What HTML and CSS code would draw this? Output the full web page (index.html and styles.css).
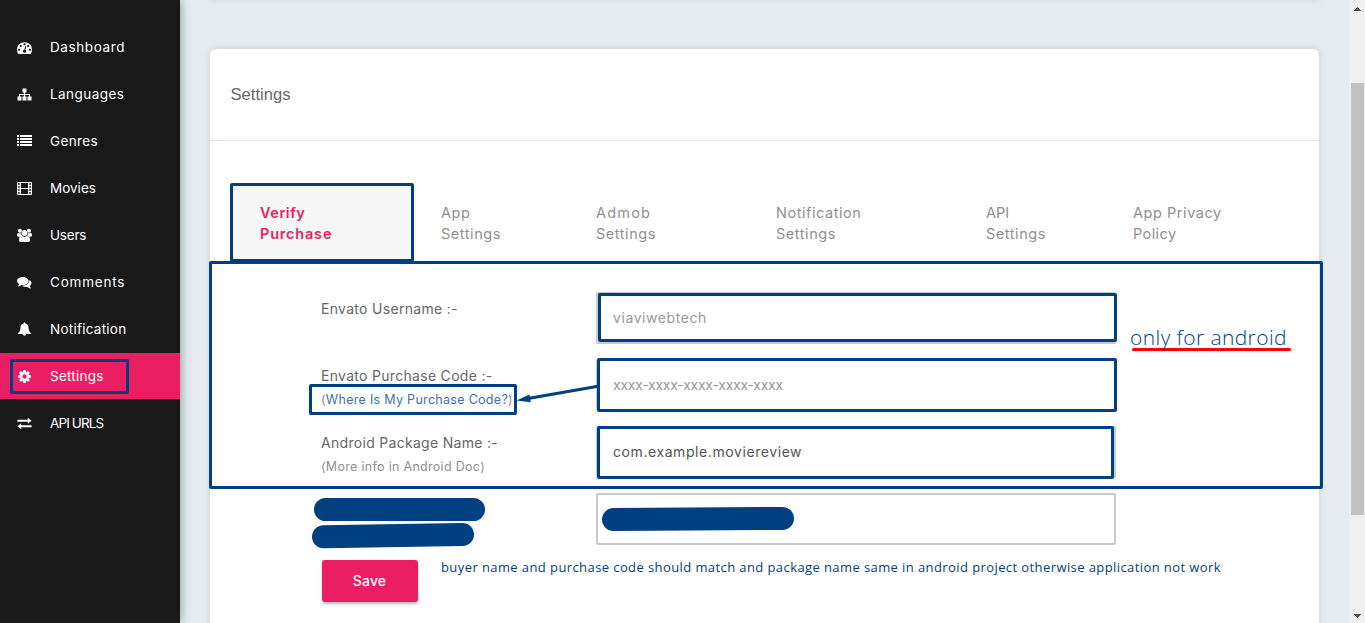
FILE: index.html
```html
<!DOCTYPE html>
<html lang="en">
<head>
<meta charset="utf-8">
<title>Settings</title>
<link rel="stylesheet" href="styles.css">
</head>
<body>
<div class="app">
  <nav class="sidebar">
    <a class="nav-item"><svg class="icon" viewBox="0 0 1792 1792"><path d="M384 1152q0-53-37.5-90.5t-90.5-37.5-90.5 37.5-37.5 90.5 37.5 90.5 90.5 37.5 90.5-37.5 37.5-90.5zm192-448q0-53-37.5-90.5t-90.5-37.5-90.5 37.5-37.5 90.5 37.5 90.5 90.5 37.5 90.5-37.5 37.5-90.5zm428 481l101-382q6-26-7.5-48.5t-38.5-29.5-48 6.5-30 39.5l-101 382q-60 5-107 43.5t-63 98.5q-20 77 20 146t117 89 146-20 89-117q16-60-6-117t-72-91zm660-33q0-53-37.5-90.5t-90.5-37.5-90.5 37.5-37.5 90.5 37.5 90.5 90.5 37.5 90.5-37.5 37.5-90.5zm-640-640q0-53-37.5-90.5t-90.5-37.5-90.5 37.5-37.5 90.5 37.5 90.5 90.5 37.5 90.5-37.5 37.5-90.5zm448 192q0-53-37.5-90.5t-90.5-37.5-90.5 37.5-37.5 90.5 37.5 90.5 90.5 37.5 90.5-37.5 37.5-90.5zm320 448q0 261-141 483-19 29-54 29h-1402q-35 0-54-29-141-221-141-483 0-182 71-348t191-286 286-191 348-71 348 71 286 191 191 286 71 348z"/></svg><span class="n1">Dashboard</span></a>
    <a class="nav-item"><svg class="icon" viewBox="0 0 15 15"><path d="M5.500 1.500h4v4H8.100v1.500h4.900v2.500h1.500v4h-4v-4h1.500V8H8.100v1.500h1.400v4h-4v-4h1.400V8H3v1.500h1.500v4h-4v-4H2V7h4.900V5.500H5.500z"/></svg><span class="n2">Languages</span></a>
    <a class="nav-item"><svg class="icon" viewBox="0 0 15 15"><path d="M0 1h2v2H0zm3 0h12v2H3zM0 4h2v2H0zm3 0h12v2H3zM0 7h2v2H0zm3 0h12v2H3zM0 10h2v2H0zm3 0h12v2H3z"/></svg><span class="n3">Genres</span></a>
    <a class="nav-item"><svg class="icon" viewBox="0 0 15 15"><path fill-rule="evenodd" d="M1 1h13q1 0 1 1v11q0 1-1 1H1q-1 0-1-1V2q0-1 1-1zM1 2.200v1.600h1.800V2.200zM1 5.200v1.600h1.800V5.200zM1 8.200v1.600h1.800V8.200zM1 11.200v1.600h1.800v-1.600zM12.200 2.200v1.600H14V2.200zM12.200 5.200v1.600H14V5.200zM12.200 8.200v1.600H14V8.200zM12.200 11.200v1.600H14v-1.600zM4 2v5h7V2zM4 8v5h7V8z"/></svg><span class="n4">Movies</span></a>
    <a class="nav-item"><svg class="icon" viewBox="0 0 15 15"><circle cx="3" cy="2.700" r="2"/><circle cx="12" cy="2.700" r="2"/><circle cx="7.500" cy="5" r="2.900"/><path d="M0 7.500Q0 4.700 1.200 4.700q1.600 1 2.900.4 0 1.900 1 3L2.700 8.700Q0 8.900 0 7.500zM15 7.500q0-2.800-1.200-2.800-1.600 1-2.900.4 0 1.900-1 3l2.400.6Q15 8.900 15 7.500zM2 12.200q0-4.200 2.700-4.400 2.800 1.800 5.600 0 2.700.2 2.700 4.400 0 1.800-1.800 1.800H3.800Q2 14 2 12.200z"/></svg><span class="n5">Users</span></a>
    <a class="nav-item"><svg class="icon" viewBox="0 0 15 15"><path d="M5.800 2C9 2 11.600 3.800 11.600 6S9 10 5.800 10l-1.200-.1Q3 11.300 1 11.400l-.2-.3Q2 10.300 2 9 0 7.800 0 6c0-2.200 2.600-4 5.800-4zM12.500 5.100q2 1.200 2 3 0 1.700-1.700 2.900 0 1.200 1.200 2l-.2.400q-2-.1-3.500-1.500-3.200.5-5.400-1.100 7.300 0 7.600-5.700z"/></svg><span class="n6">Comments</span></a>
    <a class="nav-item"><svg class="icon" viewBox="0 0 15 15"><path d="M7.500.3q.8 0 .8 1.100 3.200.6 3.200 4.200 0 4 2.700 5.900v.5H9.300q-.2 1.800-1.800 1.800T5.700 12H.8v-.5q2.700-1.900 2.700-5.900 0-3.600 3.200-4.200 0-1.100.8-1.100z"/></svg><span class="n7">Notification</span></a>
    <a class="nav-item active"><svg class="icon" viewBox="0 0 1792 1792"><path d="M1152 896q0-106-75-181t-181-75-181 75-75 181 75 181 181 75 181-75 75-181zm512-109v222q0 12-8 23t-20 13l-185 28q-19 54-39 91 35 50 107 138 10 12 10 25t-9 23q-27 37-99 108t-94 71q-12 0-26-9l-138-108q-44 23-91 38-16 136-29 186-7 28-36 28h-222q-14 0-24.500-8.500t-11.500-21.500l-28-184q-49-16-90-37l-141 107q-10 9-25 9-14 0-25-11-126-114-165-168-7-10-7-23 0-12 8-23 15-21 51-66.500t54-70.500q-27-50-41-99l-183-27q-13-2-21-12.500t-8-23.500v-222q0-12 8-23t19-13l186-28q14-46 39-92-40-57-107-138-10-12-10-24 0-10 9-23 26-36 98.500-107.500t94.500-71.500q13 0 26 10l138 107q44-23 91-38 16-136 29-186 7-28 36-28h222q14 0 24.500 8.500t11.500 21.500l28 184q49 16 90 37l142-107q9-9 24-9 13 0 25 10 129 119 165 170 7 8 7 22 0 12-8 23-15 21-51 66.500t-54 70.500q26 50 41 98l183 28q13 2 21 12.500t8 23.500z"/></svg><span class="n8">Settings</span></a>
    <a class="nav-item"><svg class="icon" viewBox="0 0 15 15"><path d="M.5 3.700h10.300V1.700L14.600 4.700l-3.800 3V5.700H.5zM14.600 9.300H4.200V7.300L.4 10.300l3.800 3v-2h10.400z"/></svg><span class="n9">API URLS</span></a>
  </nav>

  <main class="content">
    <div class="prev-card"></div>
    <section class="card">
      <header class="card-header">Settings</header>
      <div class="tabs">
        <a class="tab selected"><span class="t1">Verify</span><span class="t2">Purchase</span></a>
        <a class="tab"><span>App</span><span>Settings</span></a>
        <a class="tab"><span class="t4">Admob</span><span>Settings</span></a>
        <a class="tab"><span>Notification</span><span>Settings</span></a>
        <a class="tab"><span class="t5">API</span><span>Settings</span></a>
        <a class="tab"><span>App Privacy</span><span class="t6">Policy</span></a>
      </div>
      <form class="form">
        <div class="row">
          <div class="label"><span>Envato Username :-</span></div>
          <div class="field muted"><span class="f1">viaviwebtech</span></div>
        </div>
        <div class="row">
          <div class="label"><span>Envato Purchase Code :-</span><small>(<a class="link">Where Is My Purchase Code?</a>)</small></div>
          <div class="field muted"><span class="f2">xxxx-xxxx-xxxx-xxxx-xxxx</span></div>
        </div>
        <div class="row">
          <div class="label"><span>Android Package Name :-</span><small>(More info in Android Doc)</small></div>
          <div class="field"><span class="f3">com.example.moviereview</span></div>
        </div>
        <div class="row">
          <div class="label"></div>
          <div class="field"></div>
        </div>
        <div class="save">Save</div>
      </form>
    </section>
  </main>

  <div class="scrollbar">
    <svg class="arrow" viewBox="0 0 7 4" shape-rendering="crispEdges"><path d="M3 0h1v1h1v1h1v1h1v1H0V3h1V2h1V1h1z"/></svg>
    <div class="thumb"></div>
    <svg class="arrow" viewBox="0 0 7 4" shape-rendering="crispEdges"><path d="M0 0h7v1H6v1H5v1H4v1H3V3H2V2H1V1H0z"/></svg>
  </div>

  <svg class="marks" viewBox="0 0 1365 623">
    <g class="box">
      <rect x="11.500" y="360.500" width="116" height="32" rx=".5"/>
      <rect x="231.500" y="184.500" width="181" height="76" rx=".5"/>
      <rect x="210.500" y="262.500" width="1111" height="225" rx=".5"/>
      <rect x="599.500" y="294.500" width="516" height="46" rx=".5"/>
      <rect x="598.500" y="359.500" width="517" height="51" rx=".5"/>
      <rect x="598.500" y="427.500" width="514" height="50" rx=".5"/>
      <rect x="310.500" y="385.500" width="205" height="28" rx=".5"/>
      <path d="M598 386.200L528 398.500"/>
    </g>
    <path class="head" d="M516.500 400.500L529.500 394.500l1.300 7.800z"/>
    <path class="pill" d="M325.500 509.500H473.500M323.500 536.700L462.500 534.500M613.500 519.500L782.500 518.500"/>
    <path class="underline" d="M1133.500 349.500H1289.500"/>
  </svg>
  <div class="note big">only for android</div>
  <div class="note small">buyer name and purchase code should match and package name same in android project otherwise application not work</div>
</div>
</body>
</html>
```
FILE: styles.css
```css
* { box-sizing: border-box; }
body { margin: 0; overflow: hidden; font-family: Inter, "Open Sans", sans-serif; font-size: 14px; color: #555; }
.app { position: relative; display: flex; width: 1365px; height: 623px; overflow: hidden; background: #e5ebee; }

.sidebar { width: 180px; flex: none; padding-top: 24px; background: #191919; box-shadow: 0 0 10px rgba(0,0,0,.4); z-index: 1; }
.content { position: relative; }
.nav-item { display: flex; align-items: center; height: 46px; margin-bottom: 1px; padding-left: 17px; color: #fff; font-size: 13.500px; }
.nav-item.active { background: #e91e63; }
.icon { width: 15px; height: 15px; margin-right: 18px; fill: #fff; }
.n1 { letter-spacing: .6px; }
.n2 { letter-spacing: .45px; }
.n3 { letter-spacing: .35px; }
.n5 { letter-spacing: -.2px; }
.n6 { letter-spacing: .8px; }
.n7, .n8 { letter-spacing: .25px; }
.n9 { letter-spacing: -.9px; }

.content { flex: 1; padding: 0 30px; }
.prev-card { height: 0; box-shadow: 0 0 5px 1px rgba(0,0,0,.1); }
.card { width: 1109px; height: 600px; margin-top: 49px; background: #fff; border-radius: 6px; box-shadow: 0 0 6px rgba(0,0,0,.12); }
.card-header { height: 92px; padding-left: 20.500px; border-bottom: 1px solid #dfe6e8; font: 16.600px/92px "Liberation Sans", Arial, sans-serif; color: #666; }

.tabs { display: grid; grid-template-columns: 181px 155px 180px 210px 147px 1fr; height: 76px; margin: 44px 20px 0; }
.tab { display: flex; flex-direction: column; padding: 17px 0 0 30px; font-size: 14.500px; line-height: 21px; letter-spacing: .55px; color: #909090; }
.tab.selected { margin: 0 2px; padding-left: 28px; background: #f7f7f7; color: #e91e63; font-weight: 600; }
.t2 { letter-spacing: .8px; }
.t4 { letter-spacing: 1.200px; }
.t5 { letter-spacing: 0; }
.t6 { letter-spacing: .4px; }

.form { padding: 31px 0 0 111px; }
.row { display: flex; height: 67px; }
.label { display: flex; flex-direction: column; align-items: flex-start; width: 275px; padding-top: 7px; line-height: 20px; letter-spacing: .3px; color: #666; }
.label small { margin-top: 4px; font-size: 12.500px; line-height: 19px; color: #909090; }
.link { color: #3f6fae; }
.field { display: flex; align-items: center; width: 520px; height: 52px; padding: 0 0 2px 15px; border: 2px solid #c9c9c9; border-radius: 2px; color: #555; }
.field.muted { color: #999; }
.f1, .f3 { letter-spacing: .58px; }
.f2 { letter-spacing: -.26px; }
.save { width: 96px; height: 42px; margin-left: 1px; padding-right: 1px; border-radius: 3px; background: #e91e63; color: #fff; font-weight: 500; line-height: 42px; letter-spacing: .2px; text-align: center; box-shadow: 0 2px 3px rgba(30,70,90,.35); }

.scrollbar { display: flex; flex-direction: column; align-items: center; width: 16px; flex: none; padding-top: 7px; background: #f0f0f0; }
.arrow { width: 7px; height: 4px; fill: #4d4d4d; }
.thumb { width: 13px; height: 432px; margin: 72px 0 99px; background: #c1c1c1; }

.marks { position: absolute; inset: 0; width: 1365px; height: 623px; z-index: 2; fill: none; }
.box { stroke: #003f80; stroke-width: 3; }
.head { fill: #003f80; }
.pill { stroke: #003f80; stroke-width: 23; stroke-linecap: round; }
.underline { stroke: #f00; stroke-width: 3; stroke-linecap: round; }
.note { position: absolute; z-index: 3; color: #003f80; font-family: "Open Sans", sans-serif; white-space: nowrap; }
.note.big { left: 1130px; top: 322px; font-size: 21px; font-weight: 300; line-height: 30px; letter-spacing: .4px; }
.note.small { left: 441px; top: 557px; font-size: 13px; line-height: 20px; letter-spacing: .41px; }
```
